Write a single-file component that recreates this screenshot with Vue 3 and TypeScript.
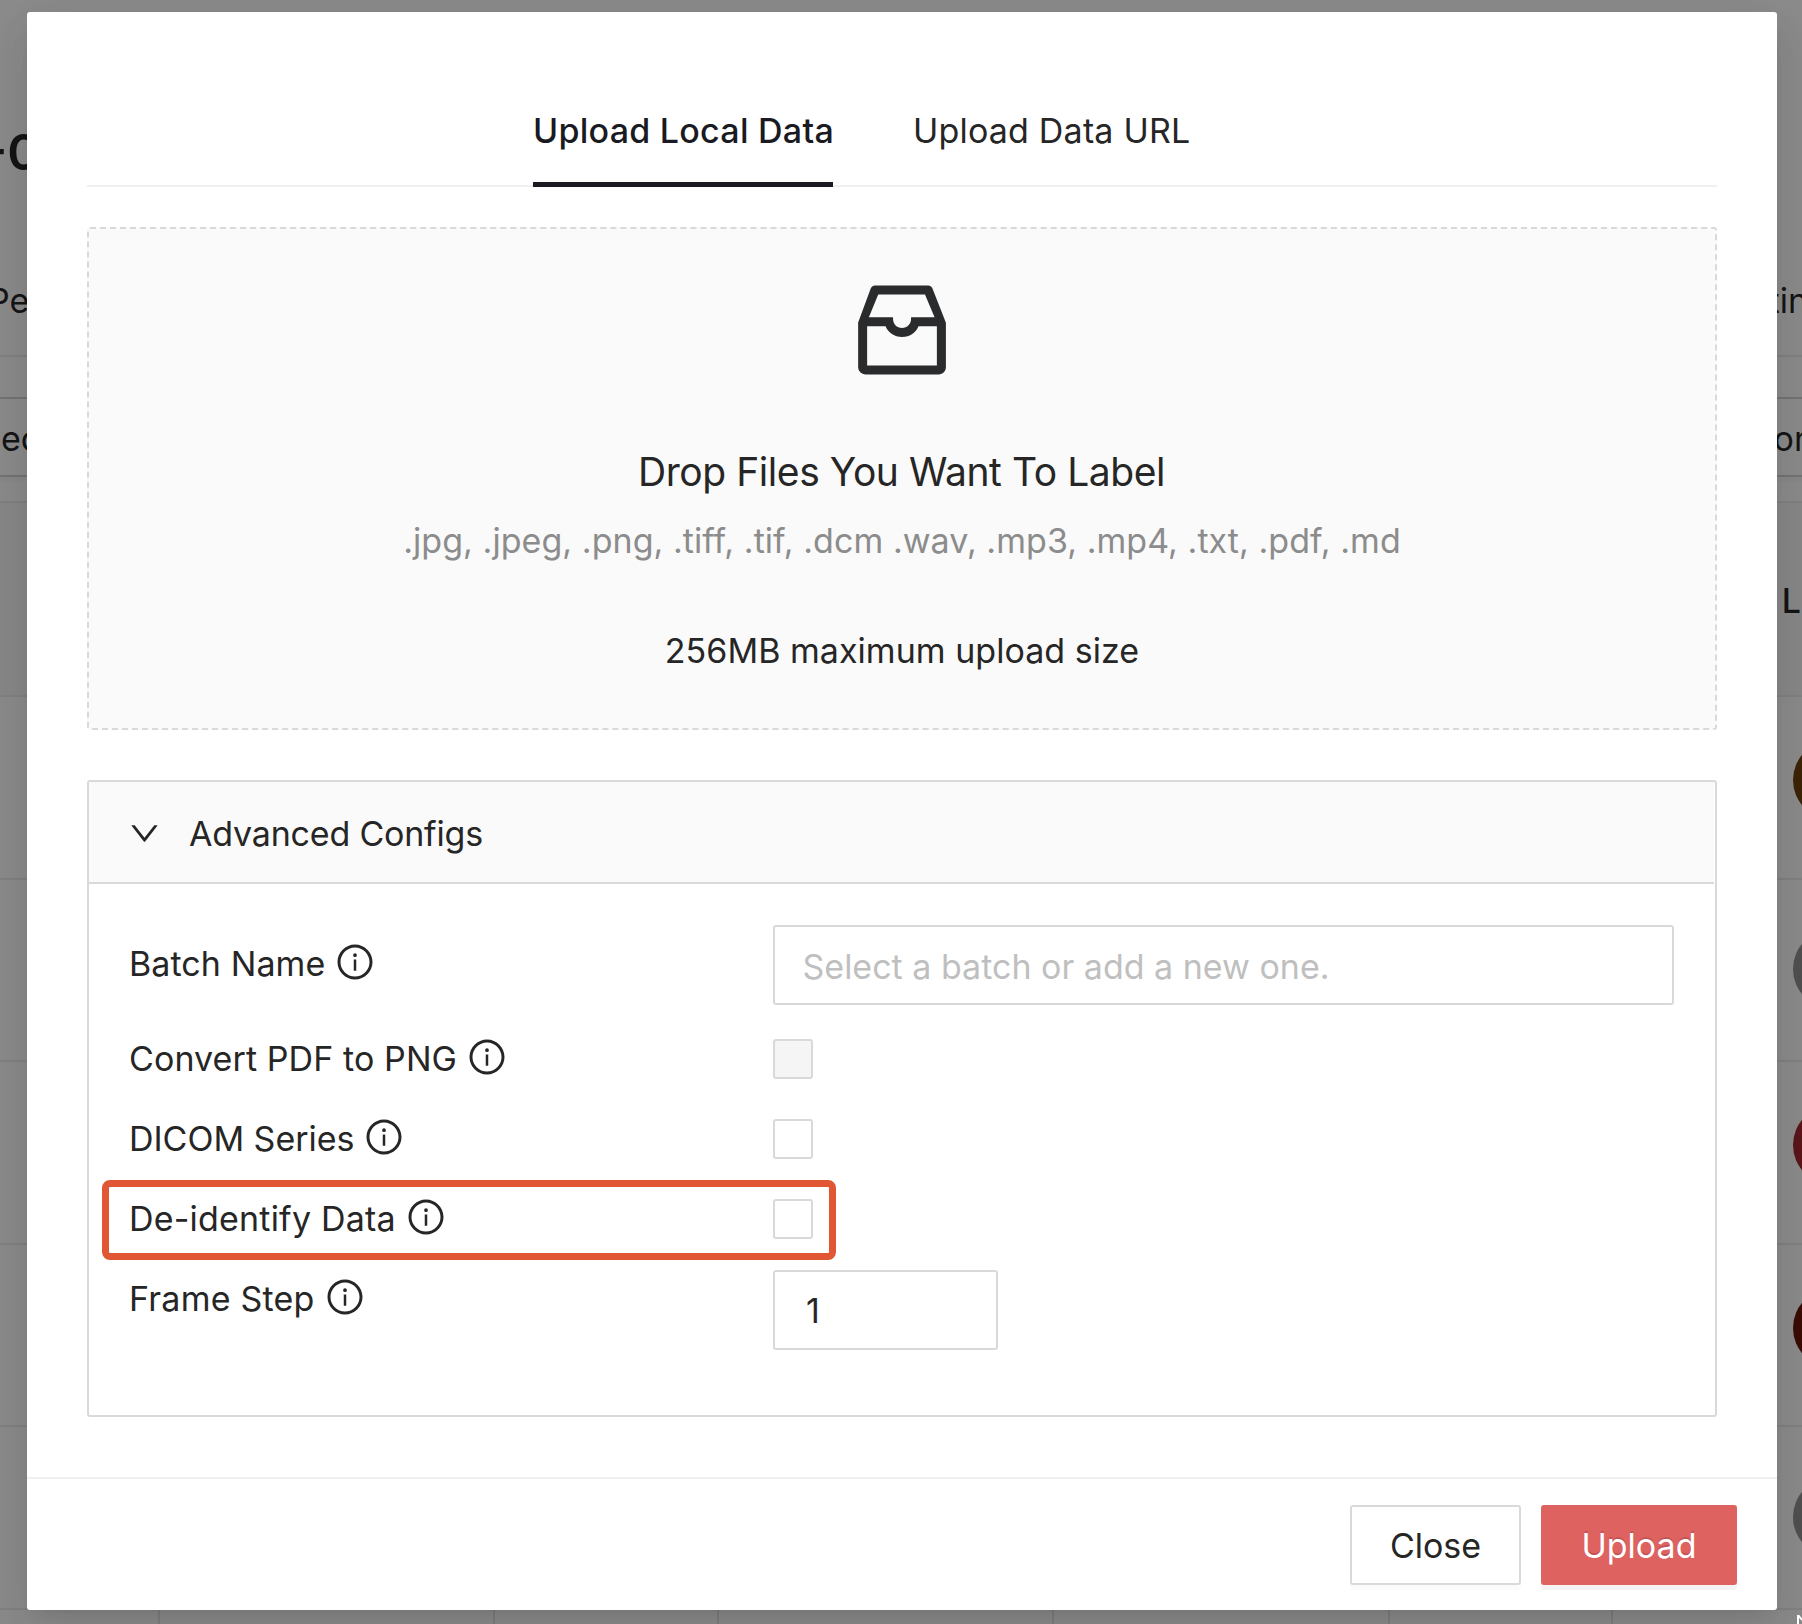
<script setup lang="ts">
import { ref } from 'vue'

interface ConfigRow {
  key: string
  label: string
  tracking: string
  control: 'select' | 'checkbox' | 'number'
  disabled?: boolean
  highlighted?: boolean
}

const rows: ConfigRow[] = [
  { key: 'batch', label: 'Batch Name', tracking: '0.08px', control: 'select' },
  { key: 'pdf', label: 'Convert PDF to PNG', tracking: '0.09px', control: 'checkbox', disabled: true },
  { key: 'dicom', label: 'DICOM Series', tracking: '-0.03px', control: 'checkbox' },
  { key: 'deid', label: 'De-identify Data', tracking: '0.2px', control: 'checkbox', highlighted: true },
  { key: 'frame', label: 'Frame Step', tracking: '0.22px', control: 'number' },
]

const frameStep = ref('1')
const batchName = ref('')
const avatars = ['#3d2409', '#505050', '#5b161b', '#3a0c05', '#505050']
</script>

<template>
  <div class="screen">
    <!-- Page behind the dialog -->
    <div class="page">
      <div class="page-title">-0</div>
      <div class="page-tabs"><span class="t-left">Pe</span><span class="t-right tin">tin</span></div>
      <div class="page-filter">
        <div class="filter-box"><span class="f-left">ec</span><span class="f-right">on</span></div>
      </div>
      <div class="table-head"><span>L</span></div>
      <div v-for="(c, i) in avatars" :key="i" class="table-row">
        <span class="avatar" :class="'a' + i" :style="{ background: c }"></span>
      </div>
      <div class="table-last"><i></i><i></i><i></i><i></i><i></i><i></i></div>
    </div>

    <div class="modal">
      <div class="body">
        <div class="tabs">
          <div class="tab active">Upload Local Data</div>
          <div class="tab">Upload Data URL</div>
        </div>

        <div class="drop">
          <svg class="inbox" viewBox="0 0 1024 1024" width="120" height="120" fill="#2a2b2c">
            <path d="M885.2 446.3l-.2-.8-112.2-285.1c-5-16.1-19.9-27.2-36.8-27.2H281.2c-17 0-32.1 11.3-36.9 27.6L139.4 443l-.3.7-.2.8c-1.3 4.9-1.7 9.9-1 14.8-.1 1.6-.2 3.2-.2 4.8V830a60.9 60.9 0 0 0 60.8 60.8h627.2c33.5 0 60.8-27.3 60.9-60.8V464.1c0-1.3 0-2.6-.1-3.7.4-4.9 0-9.6-1.3-14.1zm-295.8-43l-.3 15.7c-.8 44.9-31.8 75.1-77.1 75.1-22.1 0-41.1-7.1-54.8-20.6S436 441.2 435.6 419l-.3-15.7H229.5L309 210h399.2l81.7 193.3H589.4zm-375 76.8h157.3c24.3 57.1 76 90.8 140.4 90.8 33.7 0 65-9.4 90.3-27.2 22.2-15.6 39.5-37.4 50.7-63.6h156.5V814H214.4V480.1z" />
          </svg>
          <div class="drop-title">Drop Files You Want To Label</div>
          <div class="drop-types">.jpg, .jpeg, .png, .tiff, .tif, .dcm .wav, .mp3, .mp4, .txt, .pdf, .md</div>
          <div class="drop-size">256MB maximum upload size</div>
        </div>

        <div class="collapse">
          <div class="collapse-head">
            <svg class="chevron" viewBox="0 0 1024 1024" width="35" height="35" fill="#262626">
              <path d="M765.7 486.8L314.9 134.7A7.97 7.97 0 0 0 302 141v77.3c0 4.9 2.3 9.6 6.1 12.6l360 281.1-360 281.1c-3.9 3-6.1 7.7-6.1 12.6V883c0 6.7 7.7 10.4 12.9 6.3l450.8-352.1a31.96 31.96 0 0 0 0-50.4z" />
            </svg>
            <span>Advanced Configs</span>
          </div>
          <div class="form">
            <div v-for="r in rows" :key="r.key" class="row" :class="[r.control, r.key]">
              <div class="label">
                <span :style="{ letterSpacing: r.tracking }">{{ r.label }}</span>
                <svg class="info" viewBox="0 0 1024 1024" width="40" height="40" fill="#262626">
                  <path d="M512 64C264.6 64 64 264.6 64 512s200.6 448 448 448 448-200.6 448-448S759.4 64 512 64zm0 820c-205.4 0-372-166.600-372-372s166.600-372 372-372 372 166.600 372 372-166.600 372-372 372z" />
                  <path d="M464 336a48 48 0 1 0 96 0 48 48 0 1 0-96 0zm72 112h-48c-4.400 0-8 3.600-8 8v272c0 4.400 3.600 8 8 8h48c4.400 0 8-3.600 8-8V456c0-4.400-3.600-8-8-8z" />
                </svg>
              </div>
              <input v-if="r.control === 'select'" v-model="batchName" class="input wide" placeholder="Select a batch or add a new one." />
              <input v-else-if="r.control === 'number'" v-model="frameStep" class="input short" />
              <span v-else class="check" :class="{ disabled: r.disabled }"></span>
              <div v-if="r.highlighted" class="highlight"></div>
            </div>
          </div>
        </div>
      </div>

      <div class="footer">
        <button class="btn">Close</button>
        <button class="btn danger">Upload</button>
      </div>
    </div>

    <svg class="cursor" width="5" height="9" viewBox="0 0 5 9"><path d="M1 0v9M1 0l4 5" stroke="#fff" stroke-width="2" fill="none" /></svg>
  </div>
</template>

<style>
body {
  margin: 0;
  overflow: hidden;
}
</style>

<style scoped>
.screen,
.screen * {
  box-sizing: border-box;
}
.screen {
  position: relative;
  width: 1802px;
  height: 1624px;
  overflow: hidden;
  background: #8c8c8c;
  color: #262626;
  font-family: Inter, "Liberation Sans", sans-serif;
  font-size: 34px;
  line-height: 56px;
}

/* page behind */
.page {
  position: absolute;
  inset: 0;
  overflow: hidden;
  color: #151515;
}
.page-title {
  height: 246px;
  padding: 120px 0 0;
  font-size: 50px;
  font-weight: 600;
  line-height: 64px;
  margin-left: -16px;
}
.page-tabs {
  display: flex;
  justify-content: space-between;
  height: 111px;
  padding-top: 27px;
  border-bottom: 2px solid #828282;
}
.t-left {
  margin-left: -12px;
}
.tin {
  margin-right: -6px;
}
.page-filter {
  height: 146px;
  padding-top: 40px;
  border-bottom: 2px solid #828282;
}
.filter-box {
  display: flex;
  justify-content: space-between;
  height: 80px;
  padding-top: 12px;
  border-top: 2px solid #747474;
  border-bottom: 2px solid #747474;
  box-shadow: 0 5px 0 rgba(0, 0, 0, 0.015);
}
.f-left {
  margin-left: 1px;
}
.f-right {
  margin-right: -12px;
}
.table-head {
  display: flex;
  justify-content: flex-end;
  height: 194px;
  padding: 70px 0 0;
  background: #898989;
  border-bottom: 2px solid #828282;
  font-weight: 500;
}
.table-head span {
  margin-right: 1px;
}
.table-row {
  display: flex;
  align-items: center;
  justify-content: flex-end;
  height: 182.5px;
  border-bottom: 2px solid #828282;
}
.avatar {
  flex: none;
  width: 80px;
  height: 80px;
  margin-top: -14px;
  margin-right: -71px;
  border-radius: 50%;
}
.a1,
.a4 {
  margin-top: -1px;
}
.table-last {
  display: grid;
  grid-template-columns: 160px 335px 224px 335px 336px 223px;
  height: 20px;
}
.table-last i {
  border-right: 2px solid #7f7f7f;
}

/* dialog */
.modal {
  position: absolute;
  left: 27px;
  top: 12px;
  width: 1750px;
  height: 1598px;
  display: flex;
  flex-direction: column;
  background: #fff;
  border-radius: 3px;
  box-shadow:
    0 7.5px 15px -10px rgba(0, 0, 0, 0.12),
    0 15px 40px rgba(0, 0, 0, 0.08),
    0 22.5px 70px 20px rgba(0, 0, 0, 0.05);
}
.body {
  flex: 1;
  padding: 90px 60px 0;
}
.tabs {
  display: flex;
  gap: 80px;
  height: 85px;
  padding-left: 446px;
  border-bottom: 2px solid #f0f0f0;
}
.tab {
  height: 85px;
  padding-top: 1px;
  letter-spacing: 0.19px;
}
.tab.active {
  width: 300px;
  border-bottom: 5px solid #1a1a22;
  color: #1a1a22;
  font-weight: 500;
  letter-spacing: 0.26px;
  white-space: nowrap;
}
.drop {
  display: flex;
  flex-direction: column;
  align-items: center;
  height: 503px;
  margin-top: 40px;
  padding-top: 41px;
  border: 2px dashed #d9d9d9;
  border-radius: 3px;
  background: #fafafa;
}
.inbox {
  display: block;
  flex: none;
}
.drop-title {
  margin-top: 51px;
  margin-right: 1px;
  font-size: 39px;
  line-height: 62px;
  letter-spacing: -0.43px;
}
.drop-types {
  margin-top: 10px;
  color: #8c8c8c;
  letter-spacing: 0.05px;
}
.drop-size {
  margin-top: 54px;
  letter-spacing: 0.03px;
}
.collapse {
  height: 637px;
  margin-top: 50px;
  border: 2px solid #d9d9d9;
  border-radius: 3px;
}
.collapse-head {
  display: flex;
  align-items: center;
  height: 102px;
  margin-right: 1px;
  padding-left: 37.5px;
  border-bottom: 2px solid #d9d9d9;
  background: #fafafa;
  letter-spacing: -0.2px;
}
.collapse-head span {
  margin-left: 27.5px;
  padding-top: 3px;
}
.chevron {
  display: block;
  transform: rotate(90deg);
}
.form {
  display: flex;
  flex-direction: column;
  padding: 41px 41px 0 40px;
}
.row {
  position: relative;
  display: grid;
  grid-template-columns: 644px 1fr;
  align-items: center;
  height: 40px;
  margin-top: 40px;
}
.row.batch,
.row.frame {
  height: 80px;
  align-items: start;
}
.row.batch {
  margin-top: 0;
}
.row.batch .label {
  margin-top: 11px;
}
.row.pdf {
  margin-top: 34px;
}
.row.frame {
  margin-top: 31px;
}
.row.frame .label {
  margin-top: 1px;
}
.label {
  display: flex;
  align-items: center;
  height: 56px;
}
.checkbox .label {
  margin: -8px 0;
}
.info {
  display: block;
  margin-left: 10px;
  margin-top: -4px;
}
.input {
  height: 80px;
  margin: 0;
  padding: 3px 27.5px 0;
  border: 2px solid #d9d9d9;
  border-radius: 3px;
  outline: none;
  background: #fff;
  color: #262626;
  font: inherit;
}
.input::placeholder {
  color: #bfbfbf;
  opacity: 1;
}
.wide {
  width: 901px;
}
.short {
  width: 225px;
  padding-top: 1px;
  padding-left: 31px;
}
.check {
  width: 40px;
  height: 40px;
  border: 2px solid #d9d9d9;
  border-radius: 3px;
  background: #fff;
}
.check.disabled {
  background: #f5f5f5;
}
.highlight {
  position: absolute;
  left: -27px;
  top: -19px;
  width: 734px;
  height: 80px;
  border: 7px solid #e15635;
  border-radius: 8px;
}
.footer {
  display: flex;
  justify-content: flex-end;
  gap: 20px;
  height: 133px;
  padding: 26px 40px 0 0;
  border-top: 2px solid #f0f0f0;
}
.btn {
  width: 171px;
  height: 80px;
  margin: 0;
  padding: 2px 0 0;
  border: 2px solid #d9d9d9;
  border-radius: 3px;
  background: #fff;
  box-shadow: 0 5px 0 rgba(0, 0, 0, 0.015);
  color: #262626;
  font: inherit;
}
.btn.danger {
  width: 196px;
  border-color: #de6260;
  background: #de6260;
  box-shadow: 0 5px 0 rgba(0, 0, 0, 0.045);
  color: #fff;
  text-shadow: 0 -2.5px 0 rgba(0, 0, 0, 0.12);
}
.cursor {
  position: absolute;
  right: 0;
  bottom: 0;
}
</style>
